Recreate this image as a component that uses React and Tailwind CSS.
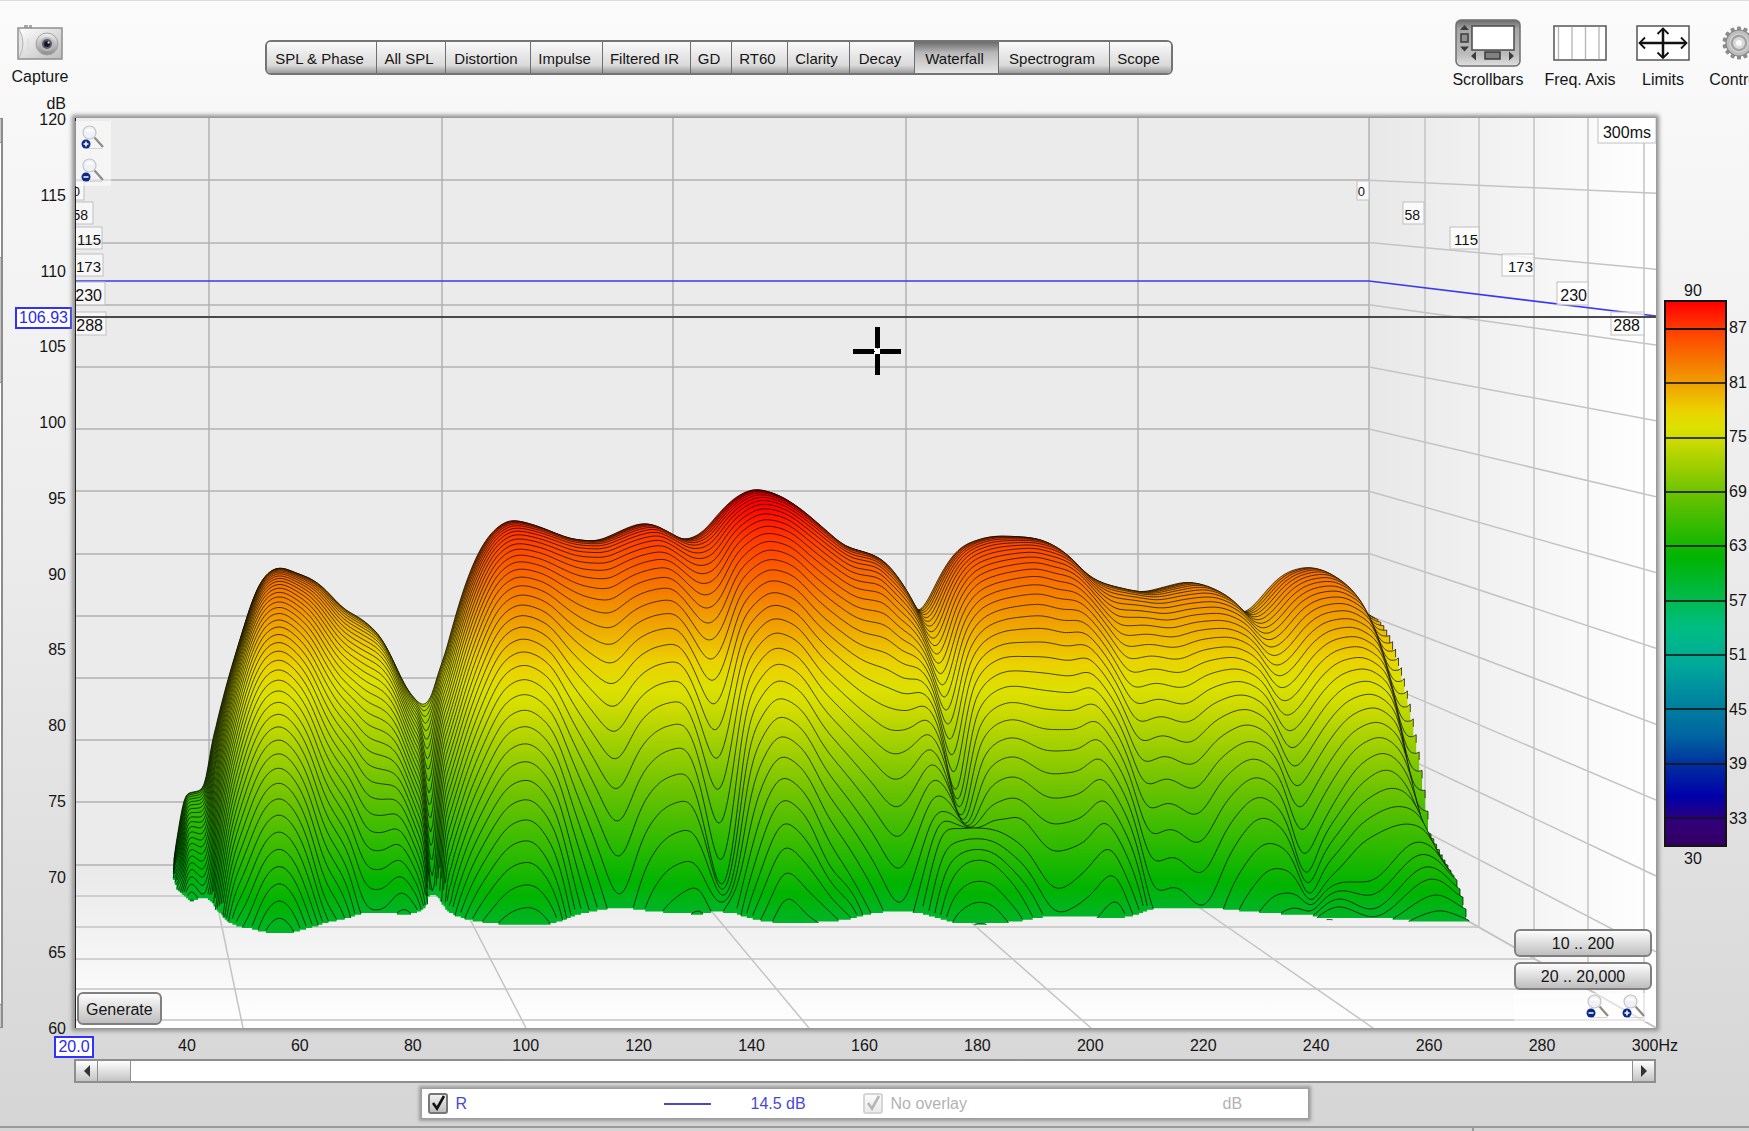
import React from "react";

const TABS = [
  ["SPL & Phase", "w-[110px]"],
  ["All SPL", "w-[69px]"],
  ["Distortion", "w-[85px]"],
  ["Impulse", "w-[72px]"],
  ["Filtered IR", "w-[88px]"],
  ["GD", "w-[41px]"],
  ["RT60", "w-[56px]"],
  ["Clarity", "w-[62px]"],
  ["Decay", "w-[65px]"],
  ["Waterfall", "w-[84px]"],
  ["Spectrogram", "w-[111px]"],
  ["Scope", "w-[61px]"],
];
const DB_LABELS = [120, 115, 110, 105, 100, 95, 90, 85, 80, 75, 70, 65, 60];
const HZ_LABELS = ["20.0", 40, 60, 80, 100, 120, 140, 160, 180, 200, 220, 240, 260, 280, "300Hz"];
const BAR_LABELS = [87, 81, 75, 69, 63, 57, 51, 45, 39, 33];
const BAR_ROWS = ["a", "b", "c", "d", "e", "f", "g", "h", "i"];

/* Ridge and valley tracks. Each track: growth power of its first section, then [slice, x, y] keys. */
const TRACKS = [
  [1.3, [0, 170, 900], [20, 168, 960]],
  [1.3, [0, 172, 872], [8, 171, 876], [15, 175, 890], [20, 179, 918]],
  [1.4, [0, 177, 838], [20, 184, 898], [26, 186, 940]],
  [1.7, [0, 186, 794], [22, 191, 898]],
  [1.7, [0, 201, 790], [20, 204, 896]],
  [2.0, [0, 205, 784], [28, 218, 910]],
  [2.2, [0, 211, 747], [34, 225, 918]],
  [2.3, [0, 219, 713], [36, 232, 911]],
  [2.5, [0, 231, 668], [36, 240, 900]],
  [2.6, [0, 243, 630], [36, 248, 882]],
  [2.5, [0, 253, 597], [36, 258, 855]],
  [2.4, [0, 265, 575], [36, 267, 838]],
  [2.35, [0, 279, 567], [36, 280, 830]],
  [2.3, [0, 296, 573], [36, 297, 848]],
  [2.2, [0, 312, 579], [36, 311, 885]],
  [2.1, [0, 326, 590], [34, 323, 897], [36, 323, 925]],
  [2.0, [0, 344, 609], [33, 337, 901]],
  [2.0, [0, 362, 619], [32, 349, 907]],
  [2.2, [0, 370, 626], [28, 366, 889]],
  [2.2, [0, 378, 633], [28, 384, 890]],
  [2.2, [0, 393, 660], [28, 398, 873], [30, 402, 906]],
  [1.8, [0, 407, 690], [29, 414, 903]],
  [1.7, [0, 417, 701], [26, 426, 905]],
  [1.5, [0, 423, 705], [17, 433, 891]],
  [1.6, [0, 430, 699], [23, 440, 901]],
  [1.8, [0, 437, 677], [28, 446, 903]],
  [1.8, [0, 447, 647], [31, 458, 904]],
  [1.9, [0, 456, 613], [33, 471, 903]],
  [2.0, [0, 466, 582], [35, 485, 918]],
  [2.1, [0, 476, 557], [35, 497, 903]],
  [2.2, [0, 491, 533], [35, 511, 889]],
  [2.2, [0, 511, 520], [35, 530, 884]],
  [2.3, [0, 534, 525], [33, 556, 876], [35, 557, 915]],
  [2.5, [0, 552, 532], [29, 576, 865]],
  [2.7, [0, 572, 539], [27, 598, 878]],
  [2.9, [0, 594, 541], [26, 620, 900]],
  [2.8, [0, 614, 534], [27, 645, 868]],
  [2.7, [0, 629, 527], [28, 670, 868]],
  [2.65, [0, 645, 523], [28, 693, 860], [29, 699, 886], [30, 702, 908]],
  [2.7, [0, 662, 530], [25, 702, 815], [28, 714, 899]],
  [2.9, [0, 683, 540], [24, 722, 874], [25, 722, 896], [28, 722, 906], [31, 720, 926]],
  [2.6, [0, 700, 534], [25, 735, 838], [27, 736, 872], [30, 740, 896], [32, 742, 925]],
  [2.4, [0, 719, 513], [30, 751, 850], [32, 756, 886], [34, 760, 922]],
  [2.3, [0, 736, 497], [32, 768, 850]],
  [2.25, [0, 755, 489], [36, 787, 922]],
  [2.3, [0, 775, 494], [33, 808, 866]],
  [2.3, [0, 797, 507], [31, 829, 866], [34, 833, 915]],
  [2.4, [0, 822, 528], [30, 852, 878], [32, 857, 912]],
  [2.6, [0, 844, 546], [29, 875, 892]],
  [2.85, [0, 866, 553], [28, 901, 907]],
  [2.3, [0, 876, 557], [28, 920, 856]],
  [1.96, [0, 884, 563], [28, 937, 810], [30, 945, 828], [32, 947, 866], [34, 949, 905], [36, 949, 945]],
  [2.0, [0, 901, 588], [24, 947, 775], [29, 956, 824], [30, 958, 829], [33, 963, 865], [36, 964, 930]],
  [2.2, [0, 917, 615], [21, 957, 814], [24, 963, 831], [30, 969, 828], [33, 974, 860], [36, 975, 923]],
  [2.3, [0, 928, 600], [22, 963, 812], [26, 972, 829], [30, 980, 828], [33, 984, 860], [36, 984, 923]],
  [2.2, [0, 939, 577], [24, 970, 780], [29, 984, 827], [30, 991, 829], [33, 994, 864], [36, 996, 928]],
  [2.2, [0, 953, 555], [26, 982, 780], [29, 993, 819], [30, 1001, 832], [33, 1005, 875], [36, 1008, 945]],
  [2.25, [0, 966, 544], [28, 996, 803], [30, 1010, 837], [33, 1018, 890], [35, 1020, 935]],
  [2.3, [0, 998, 536], [28, 1014, 797], [29, 1017, 816], [30, 1025, 848], [32, 1030, 890], [34, 1034, 940]],
  [2.6, [0, 1024, 537], [29, 1054, 852], [30, 1057, 890], [33, 1060, 960]],
  [2.45, [0, 1037, 539], [29, 1085, 842], [32, 1090, 925]],
  [2.4, [0, 1046, 543], [29, 1104, 820], [30, 1109, 846], [32, 1118, 898], [34, 1120, 940]],
  [2.4, [0, 1060, 553], [29, 1123, 847], [31, 1129, 905]],
  [2.4, [0, 1074, 568], [28, 1137, 860], [29, 1140, 890]],
  [2.5, [0, 1094, 581], [26, 1156, 893]],
  [2.7, [0, 1118, 588], [26, 1175, 886]],
  [2.8, [0, 1141, 592], [26, 1203, 908]],
  [2.6, [0, 1164, 587], [26, 1232, 850], [28, 1242, 903]],
  [2.35, [0, 1187, 582], [26, 1262, 817], [29, 1281, 893], [32, 1290, 945]],
  [2.4, [0, 1215, 592], [25, 1284, 814], [29, 1297, 893], [32, 1298, 935]],
  [2.5, [0, 1242, 614], [24, 1304, 861], [25, 1307, 882], [27, 1310, 902], [32, 1312, 922]],
  [2.3, [0, 1257, 602], [24, 1318, 832], [28, 1323, 885], [32, 1324, 912]],
  [2.3, [0, 1274, 582], [24, 1338, 796], [28, 1341, 867], [29, 1342, 882], [32, 1338, 906], [34, 1338, 935]],
  [2.2, [0, 1290, 571], [24, 1362, 763], [28, 1366, 840], [29, 1368, 882], [31, 1371, 910], [33, 1375, 925]],
  [2.1, [0, 1309, 567], [25, 1387, 769], [27, 1399, 806], [29, 1418, 841], [32, 1433, 878], [34, 1444, 910], [36, 1446, 950]],
  [2.1, [0, 1325, 573], [25, 1400, 776], [29, 1430, 845], [32, 1443, 882], [34, 1450, 913], [36, 1453, 952]],
  [2.2, [0, 1341, 587], [25, 1415, 802], [29, 1440, 855], [32, 1452, 888], [34, 1457, 915], [36, 1460, 955]],
  [1.9, [0, 1360, 611], [21, 1418, 828], [25, 1436, 856], [30, 1452, 877], [34, 1464, 918], [36, 1468, 956]],
  [2.25, [0, 1369, 617], [21, 1431, 834], [26, 1445, 860], [30, 1457, 881], [32, 1463, 897], [34, 1469, 921], [36, 1474, 950]],
];

const SLICES = 42;
const STOPS = [
  [100, "#ff0000"], [89.5, "#ff0000"], [87, "#ff3c00"], [81, "#f0a000"], [78, "#ebd200"], [76, "#dce100"],
  [75, "#d2dc00"], [69, "#6ec300"], [62, "#00b400"], [60, "#00b428"],
];

function trackAt([power, ...keys], i) {
  let a = keys[0];
  let b = keys[1];
  let n = 1;
  while (i > b[0] && n < keys.length - 1) {
    n += 1;
    a = b;
    b = keys[n];
  }
  const u = (i - a[0]) / (b[0] - a[0]);
  let v = u;
  if (n === 1) v = u <= 1 ? Math.pow(u, power) : 1 + (u - 1) * power;
  return [a[1] + (b[1] - a[1]) * u, a[2] + (b[2] - a[2]) * v];
}

/* Monotone cubic through the knots, sampled every two pixels, then softened. */
function smooth(pts) {
  const p = pts.filter((q, k) => k === 0 || q[0] > pts[k - 1][0] + 1);
  const d = p.slice(1).map((q, k) => (q[1] - p[k][1]) / Math.max(1, q[0] - p[k][0]));
  const m = p.map((_, k) => {
    if (k === 0) return d[0];
    if (k === p.length - 1) return d[k - 1];
    return d[k - 1] * d[k] <= 0 ? 0 : (2 * d[k - 1] * d[k]) / (d[k - 1] + d[k]);
  });
  const out = [];
  let k = 0;
  const end = p[p.length - 1][0];
  for (let x = p[0][0]; x <= end; x += 2) {
    while (k < p.length - 2 && x > p[k + 1][0]) k += 1;
    const h = p[k + 1][0] - p[k][0];
    const t = (x - p[k][0]) / h;
    out.push([
      x,
      (2 * t ** 3 - 3 * t ** 2 + 1) * p[k][1] + (t ** 3 - 2 * t ** 2 + t) * h * m[k] +
        (3 * t ** 2 - 2 * t ** 3) * p[k + 1][1] + (t ** 3 - t ** 2) * h * m[k + 1],
    ]);
  }
  out.push(p[p.length - 1]);
  return soften(soften(out));
}

function soften(pts) {
  return pts.map((q, k) => {
    const x = q[0];
    const narrow = x < 215 || (x > 415 && x < 450);
    const r = Math.min(narrow ? 1 : 3, k, pts.length - 1 - k);
    let sum = 0;
    for (let j = k - r; j <= k + r; j++) sum += pts[j][1];
    return [x, sum / (2 * r + 1)];
  });
}

function buildSlices() {
  const res = [];
  for (let i = 0; i < SLICES; i++) {
    const floor = 865 + 1.66 * i;
    const pts = smooth(TRACKS.map((t) => trackAt(t, i)));
    let fill = "";
    let line = "";
    let run = [];
    const flush = () => {
      if (run.length > 1) {
        const s = run.map((q) => q[0].toFixed(1) + " " + q[1].toFixed(1)).join("L");
        line += "M" + s;
        fill += "M" + run[0][0].toFixed(1) + " " + floor.toFixed(1) + "L" + s + "L" + run[run.length - 1][0].toFixed(1) + " " + floor.toFixed(1) + "Z";
      }
      run = [];
    };
    pts.forEach((q) => (q[1] < floor ? run.push(q) : flush()));
    if (run.length) {
      const last = run[run.length - 1];
      run.push([last[0], Math.min(floor, last[1] + 8)]);
    }
    flush();
    res.push({ i, floor, fill, line });
  }
  return res;
}
const SURFACE = buildSlices();

const WALL_X = [209, 442, 673, 906, 1138, 1369];
const FLOOR_X = [243, 526, 809, 1091, 1373, 1656];
const DEPTH = [[1425, 896], [1479, 927], [1534, 959], [1588, 989], [1644, 1020]];
const LEVELS = Array.from({ length: 12 }, (_, k) => k);
const TAGS = [
  ["0", 1357, 1369, 181, 19, 84, 80, "text-[13px]"],
  ["58", 1403, 1424, 202, 22, 93, 88, "text-[14px]"],
  ["115", 1450, 1479, 227, 22, 102, 101, "text-[15px]"],
  ["173", 1502, 1534, 254, 22, 103, 101, "text-[15px]"],
  ["230", 1557, 1588, 282, 23, 105, 102, "text-[16px]"],
  ["288", 1611, 1644, 312, 23, 106, 103, "text-[16px]"],
];

function Waterfall() {
  return (
    <svg viewBox="75 118 1581 910" className="block h-auto w-full" role="img" aria-label="Waterfall plot">
      <defs>
        <linearGradient id="side" x1="0" x2="1" y1="0" y2="0">
          <stop offset="0" stopColor="#e8e8e8" />
          <stop offset="1" stopColor="#ffffff" />
        </linearGradient>
        <linearGradient id="ground" x1="0" x2="0" y1="0" y2="1">
          <stop offset="0" stopColor="#e9e9e9" />
          <stop offset="1" stopColor="#ffffff" />
        </linearGradient>
        {SURFACE.map(({ i, floor }) => (
          <linearGradient key={i} id={"level" + i} gradientUnits="userSpaceOnUse" x1="0" x2="0" y1={floor - ((floor - 118) * 40) / 60} y2={floor}>
            {STOPS.map(([db, c]) => (
              <stop key={db} offset={(100 - db) / 40} stopColor={c} />
            ))}
          </linearGradient>
        ))}
      </defs>
      <rect x="75" y="118" width="1294" height="747" fill="#ebebeb" />
      <path d="M1369 118H1656V1028L1369 865Z" fill="url(#side)" />
      <path d="M75 865H1369L1656 1028H75Z" fill="url(#ground)" />
      <g stroke="#b2b2b2" strokeWidth="1.5" fill="none">
        {WALL_X.map((x) => (
          <path key={x} d={`M${x} 118V865`} />
        ))}
        {LEVELS.map((k) => (
          <path key={k} d={`M75 ${Math.round(180.3 + 62.2 * k)}H1369`} />
        ))}
      </g>
      <g stroke="#c4c4c4" strokeWidth="1.5" fill="none">
        {LEVELS.map((k) => (
          <path key={k} d={`M1369 ${180.3 + 62.2 * k}L1656 ${193.3 + 75.85 * k}`} />
        ))}
        {WALL_X.map((x, k) => (
          <path key={x} d={`M${x} 865L${FLOOR_X[k]} 1028`} />
        ))}
        {DEPTH.map(([x, y]) => (
          <path key={x} d={`M${x} 118V${y}H75`} />
        ))}
      </g>
      {SURFACE.map(({ i, fill, line }) => (
        <g key={i}>
          <path d={fill} fill={`url(#level${i})`} />
          <path d={line} fill="none" stroke="#000" strokeOpacity="0.68" strokeWidth="1" />
        </g>
      ))}
      <path d="M75 281H1369L1656 316" fill="none" stroke="#3a3af0" strokeWidth="1.6" />
      <g fontFamily="Liberation Sans, Arial, sans-serif" fill="#111">
        {TAGS.map(([t, x1, x2, y, h, lx, tx, size]) => (
          <g key={t} className={size}>
            <rect x={x1} y={y} width={x2 - x1} height={h} fill="#fff" fillOpacity="0.75" stroke="#c0c0c0" />
            <text x={t === "115" || t === "173" || t === "230" ? x2 - 1 : x2 - 4} y={y + h - 4} textAnchor="end">{t}</text>
            <rect x="60" y={y} width={lx - 60} height={h} fill="#fff" fillOpacity="0.6" stroke="#c0c0c0" />
            <text x={tx} y={y + h - 4} textAnchor="end">{t}</text>
          </g>
        ))}
        <rect x="1598" y="117" width="58" height="26" fill="#fff" stroke="#c0c0c0" />
        <text x="1651" y="138" textAnchor="end" className="text-[16px]">300ms</text>
      </g>
      <path d="M75 317H1656" stroke="#4a4a4a" strokeWidth="2" />
      <path d="M75 118V1028" stroke="#222" strokeWidth="2" />
      <rect x="874" y="348" width="7" height="7" fill="#fff" />
      <path d="M853 351.5h21M880 351.5h21M877.500 327v21M877.500 354v21" stroke="#000" strokeWidth="5" />
      <path d="M877 348h1M877 354.5h1M874 351.5h1M880 351.500h1" stroke="#000" strokeWidth="1" />
    </svg>
  );
}

function Magnifier({ plus }) {
  return (
    <svg viewBox="0 0 24 26" className="h-[26px] w-[24px]" aria-hidden="true">
      <path d="M6 24.500h15" stroke="#d4d4d4" />
      <path d="M13.500 13.500L22 23" stroke="#8f8a84" strokeWidth="2.200" />
      <circle cx="8.500" cy="8.500" r="6.500" fill="#f0f1f6" stroke="#c4c4c8" strokeWidth="1.200" />
      <path d="M4 7.500a5 5 0 0 1 9 0" fill="#fff" />
      <circle cx="5" cy="20" r="4.500" fill="#0b2a86" />
      <path d={plus ? "M2.500 20h5M5 17.500v5" : "M2.500 20h5"} stroke="#fff" strokeWidth="1.500" />
    </svg>
  );
}

function CameraIcon() {
  return (
    <svg viewBox="0 0 46 38" className="h-[38px] w-[46px]" aria-hidden="true">
      <defs>
        <linearGradient id="cam" x1="0" x2="1" y1="0" y2="1">
          <stop offset="0" stopColor="#fff" />
          <stop offset="1" stopColor="#bdbdbd" />
        </linearGradient>
        <linearGradient id="lens" x1="0" x2="0" y1="0" y2="1">
          <stop offset="0" stopColor="#f2f2f2" />
          <stop offset="1" stopColor="#8b8b8b" />
        </linearGradient>
      </defs>
      <path d="M7 1h4v3H7zM12 1h3v3h-3z" fill="#a8a8a8" />
      <rect x="1" y="4" width="44" height="31" fill="url(#cam)" stroke="#8e8e8e" strokeWidth="1.500" />
      <path d="M2 5q8 14 0 29" fill="#e4e4e4" stroke="#b5b5b5" />
      <path d="M11 14v12" stroke="#d8d8d8" />
      <circle cx="30" cy="20" r="11" fill="url(#lens)" stroke="#a2a2a2" />
      <circle cx="30" cy="20" r="7" fill="#b9b9b9" />
      <circle cx="30" cy="20" r="5" fill="#5c5c66" />
      <circle cx="30" cy="20" r="3" fill="#15152e" />
      <circle cx="31.500" cy="18.500" r="1" fill="#fff" />
    </svg>
  );
}

function ScrollbarsIcon() {
  return (
    <svg viewBox="0 0 66 48" className="h-[48px] w-[66px]" aria-hidden="true">
      <defs>
        <linearGradient id="press" x1="0" x2="0" y1="0" y2="1">
          <stop offset="0" stopColor="#6a6a6a" />
          <stop offset="0.2" stopColor="#a6a6a6" />
          <stop offset="0.75" stopColor="#bcbcbc" />
          <stop offset="1" stopColor="#e0e0e0" />
        </linearGradient>
      </defs>
      <rect x="1" y="1" width="64" height="46" rx="5" fill="url(#press)" stroke="#6f6f6f" strokeWidth="1.500" />
      <rect x="17" y="7" width="42" height="24" fill="#fff" stroke="#4a4a4a" strokeWidth="1.500" />
      <path d="M5 11l4.500-5 4.500 5zM5 27.500l4.500 5 4.500-5zM21 32.500l-5 4.500 5 4.500zM54 32.500l5 4.500-5 4.500z" fill="#3c3c3c" />
      <rect x="6" y="15" width="7" height="8" fill="#909090" stroke="#3c3c3c" strokeWidth="1.500" />
      <rect x="30" y="33" width="15" height="7" fill="#808080" stroke="#3c3c3c" strokeWidth="1.500" />
    </svg>
  );
}

function FreqAxisIcon() {
  return (
    <svg viewBox="0 0 54 48" className="h-[48px] w-[54px]" aria-hidden="true">
      <rect x="1" y="7" width="52" height="34" fill="#fff" stroke="#555" strokeWidth="1.500" />
      <path d="M5.500 8v32M19 8v32M32.500 8v32M46 8v32" stroke="#b4b4b4" strokeWidth="1.300" />
    </svg>
  );
}

function LimitsIcon() {
  return (
    <svg viewBox="0 0 54 48" className="h-[48px] w-[54px]" aria-hidden="true">
      <rect x="1" y="7" width="52" height="34" fill="#fff" stroke="#555" strokeWidth="1.500" />
      <path d="M4 24h46M27 10v29" stroke="#111" strokeWidth="2.500" fill="none" />
      <path d="M9 18.500L3.500 24L9 29.500M45 18.500L50.500 24L45 29.500M21.500 15L27 9.500L32.500 15M21.500 33.500L27 39L32.500 33.500" stroke="#111" strokeWidth="1.800" fill="none" />
    </svg>
  );
}

function GearIcon() {
  return (
    <svg viewBox="0 0 36 48" className="h-[48px] w-[36px]" aria-hidden="true">
      <g transform="translate(18 24)">
        {Array.from({ length: 14 }, (_, k) => (
          <rect key={k} x="-2" y="-16.500" width="4" height="5" rx="1" fill="#8c8c8c" transform={`rotate(${(k * 360) / 14})`} />
        ))}
        <circle r="13" fill="#bdbdbd" stroke="#868686" strokeWidth="1.200" />
        <circle r="9" fill="#a2a2a2" stroke="#cfcfcf" strokeWidth="1.500" />
        <circle r="4.500" fill="#fafafa" stroke="#d9d9d9" strokeWidth="3" />
      </g>
    </svg>
  );
}

function ToolButton({ width, icon, label }) {
  return (
    <button type="button" className={"flex shrink-0 flex-col items-center " + width}>
      {icon}
      <span className="mt-[4px] whitespace-nowrap">{label}</span>
    </button>
  );
}

function LegendCheck({ id, disabled }) {
  return (
    <span className={"relative mr-[8px] flex h-[21px] w-[20px] " + (disabled ? "opacity-30" : "")}>
      <input
        id={id}
        type="checkbox"
        defaultChecked
        disabled={disabled}
        className="peer h-full w-full appearance-none rounded-[3px] border-2 border-[#777] bg-linear-to-b from-[#f2f2f2] to-[#bdbdbd]"
      />
      <svg viewBox="0 0 20 20" className="pointer-events-none absolute inset-0 hidden peer-checked:block" aria-hidden="true">
        <path d="M5 10l4 5.500L16 3" fill="none" stroke="#111" strokeWidth="2.600" />
      </svg>
    </span>
  );
}

export default function App() {
  return (
    <div className="flex min-h-screen flex-col overflow-hidden border-t border-[#dcdcdc] bg-linear-to-b from-[#fbfbfb] via-[#ebebeb] via-50% to-[#d5d5d5] font-['Liberation_Sans',Arial,sans-serif] text-[16px] leading-[18px] text-[#161616]">
      <header className="flex h-[94px] items-start">
        <button type="button" className="ml-[12px] mt-[23px] flex w-[56px] shrink-0 flex-col items-center">
          <CameraIcon />
          <span className="mt-[6px]">Capture</span>
        </button>
        <nav className="ml-[197px] mt-[39px] flex h-[35px] shrink-0 overflow-hidden rounded-[6px] border-2 border-[#747474]">
          {TABS.map(([name, w]) => (
            <button
              key={name}
              type="button"
              className={
                "shrink-0 whitespace-nowrap border-r border-[#6e6e6e] pr-[4px] pt-[2px] text-[15px] last:border-r-0 " + w + " " +
                (name === "Waterfall"
                  ? "bg-linear-to-b from-[#6c6c6c] via-[#b9b9b9] via-35% to-[#e6e6e6]"
                  : "bg-linear-to-b from-[#fafafa] via-[#dadada] via-75% to-[#9c9c9c]")
              }
            >
              {name}
            </button>
          ))}
        </nav>
        <div className="-mr-[20px] ml-auto mt-[18px] flex shrink-0 gap-[19px]">
          <ToolButton width="w-[72px]" icon={<ScrollbarsIcon />} label="Scrollbars" />
          <ToolButton width="w-[74px]" icon={<FreqAxisIcon />} label="Freq. Axis" />
          <ToolButton width="w-[54px]" icon={<LimitsIcon />} label="Limits" />
          <ToolButton width="w-[60px]" icon={<GearIcon />} label="Controls" />
        </div>
      </header>

      <div className="mb-[5px] w-[66px] text-right">dB</div>

      <main className="flex">
        <div className="flex w-[3px] shrink-0 flex-col border-y border-r-2 border-[#8c8c8c] bg-white">
          <div className="h-[24px] border-b border-[#8c8c8c] bg-[#c9c9c9]" />
          <div className="h-[114px]" />
          <div className="h-[126px] border-y border-[#8c8c8c] bg-[#c4c4c4]" />
          <div className="flex-1" />
          <div className="h-[23px] border-t border-[#8c8c8c] bg-[#c9c9c9]" />
        </div>
        <div className="relative -mb-[11px] -mt-[8px] flex w-[72px] shrink-0 flex-col justify-between pr-[9px] text-right">
          {DB_LABELS.map((v) => (
            <span key={v} className="leading-[20px]">{v}</span>
          ))}
          <output className="absolute right-[3px] top-[22%] mt-[-7px] border-2 border-[#3030ff] bg-white px-[2px] leading-[18px] text-[#2a2aee]">106.93</output>
        </div>
        <section className="relative min-w-0 flex-1 shadow-[0_0_4px_3px_#909090]">
          <Waterfall />
          <div className="absolute left-0 top-[3px] flex flex-col gap-[7px] bg-white/50 px-[6px] py-[3px]">
            <button type="button" aria-label="Zoom in vertically"><Magnifier plus /></button>
            <button type="button" aria-label="Zoom out vertically"><Magnifier /></button>
          </div>
          <button type="button" className="absolute bottom-[3px] left-[2px] h-[33px] rounded-[6px] border-2 border-[#808080] bg-linear-to-b from-[#fdfdfd] to-[#bfbfbf] px-[7px] pt-[2px]">
            Generate
          </button>
          <div className="absolute bottom-[6px] right-[4px] flex w-[138px] flex-col items-stretch gap-[5px]">
            <button type="button" className="h-[28px] rounded-[6px] border-2 border-[#808080] bg-linear-to-b from-[#fdfdfd] to-[#bfbfbf] pt-[2px]">10 .. 200</button>
            <button type="button" className="h-[28px] rounded-[6px] border-2 border-[#808080] bg-linear-to-b from-[#fdfdfd] to-[#bfbfbf] pt-[2px]">20 .. 20,000</button>
            <div className="-mt-[2px] flex h-[29px] justify-end gap-[12px] bg-white/50 pr-[6px]">
              <button type="button" className="self-start" aria-label="Zoom out horizontally"><Magnifier /></button>
              <button type="button" className="self-start" aria-label="Zoom in horizontally"><Magnifier plus /></button>
            </div>
          </div>
        </section>
        <aside className="w-[93px] shrink-0 pt-[164px]">
          <div className="ml-[7px] w-[60px] text-center">90</div>
          <div className="flex h-[547px] pl-[8px]">
            <div className="flex w-[63px] flex-col border-2 border-[#141414] bg-[linear-gradient(to_bottom,#ff0000,#ff3c00_5%,#f0a000_15%,#ebd200_20%,#dce100_23%,#d2dc00_25%,#6ec300_35%,#00b400_47%,#00be82_60%,#00a89a_67%,#00919e_71%,#0064a0_80%,#0028a0_86%,#0000aa_91%,#320078_96%,#320064)]">
              <div className="flex-[3] border-b-2 border-[#141414]" />
              {BAR_ROWS.map((r) => (
                <div key={r} className="flex-[6] border-b-2 border-[#141414]/80" />
              ))}
              <div className="flex-[3]" />
            </div>
            <div className="flex flex-col justify-between py-[19px] pl-[2px]">
              {BAR_LABELS.map((v) => (
                <span key={v}>{v}</span>
              ))}
            </div>
          </div>
          <div className="ml-[7px] mt-[3px] w-[60px] text-center">30</div>
        </aside>
      </main>

      <div className="mt-[8px] flex h-[23px] items-start justify-between pl-[74px] pr-[94px]">
        {HZ_LABELS.map((v) => (
          <span key={v} className="flex w-0 justify-center whitespace-nowrap">
            {v === "20.0" ? (
              <output className="border-2 border-[#3030ff] bg-white px-[2px] text-[#2a2aee]">{v}</output>
            ) : (
              <span className="pt-[1px]">{v}</span>
            )}
          </span>
        ))}
      </div>

      <div className="ml-[74px] mr-[93px] flex h-[24px] shrink-0 border-2 border-[#8e8e8e] bg-white">
        <button type="button" aria-label="Scroll left" className="flex w-[22px] items-center justify-center border-r border-[#8e8e8e] bg-linear-to-b from-white to-[#c4c4c4]">
          <svg viewBox="0 0 8 12" className="h-[12px] w-[8px]"><path d="M7 0v12L1 6z" fill="#333" /></svg>
        </button>
        <div className="w-[33px] border-r border-[#8e8e8e] bg-linear-to-b from-white to-[#c4c4c4]" />
        <div className="flex-1" />
        <button type="button" aria-label="Scroll right" className="flex w-[22px] items-center justify-center border-l border-[#8e8e8e] bg-linear-to-b from-white to-[#c4c4c4]">
          <svg viewBox="0 0 8 12" className="h-[12px] w-[8px]"><path d="M1 0v12l6-6z" fill="#333" /></svg>
        </button>
      </div>

      <div className="mr-[20px] mt-[6px] flex h-[29px] w-[886px] shrink-0 items-center self-center bg-white pl-[6px] shadow-[0_0_3px_3px_#9c9c9c]">
        <LegendCheck id="trace" />
        <label htmlFor="trace" className="w-[208px] text-[#4848d8]">R</label>
        <span className="h-[2px] w-[47px] bg-[#4848d8]" />
        <span className="ml-[40px] w-[112px] text-[#4848d8]">14.5 dB</span>
        <LegendCheck id="overlay" disabled />
        <label htmlFor="overlay" className="w-[332px] text-[#b2b2b2]">No overlay</label>
        <span className="text-[#b2b2b2]">dB</span>
      </div>

      <footer className="mt-[8px] flex flex-1 border-t-2 border-[#9a9a9a]">
        <div className="flex-[1474] border-r-2 border-[#9a9a9a]" />
        <div className="flex-[275]" />
      </footer>
    </div>
  );
}
